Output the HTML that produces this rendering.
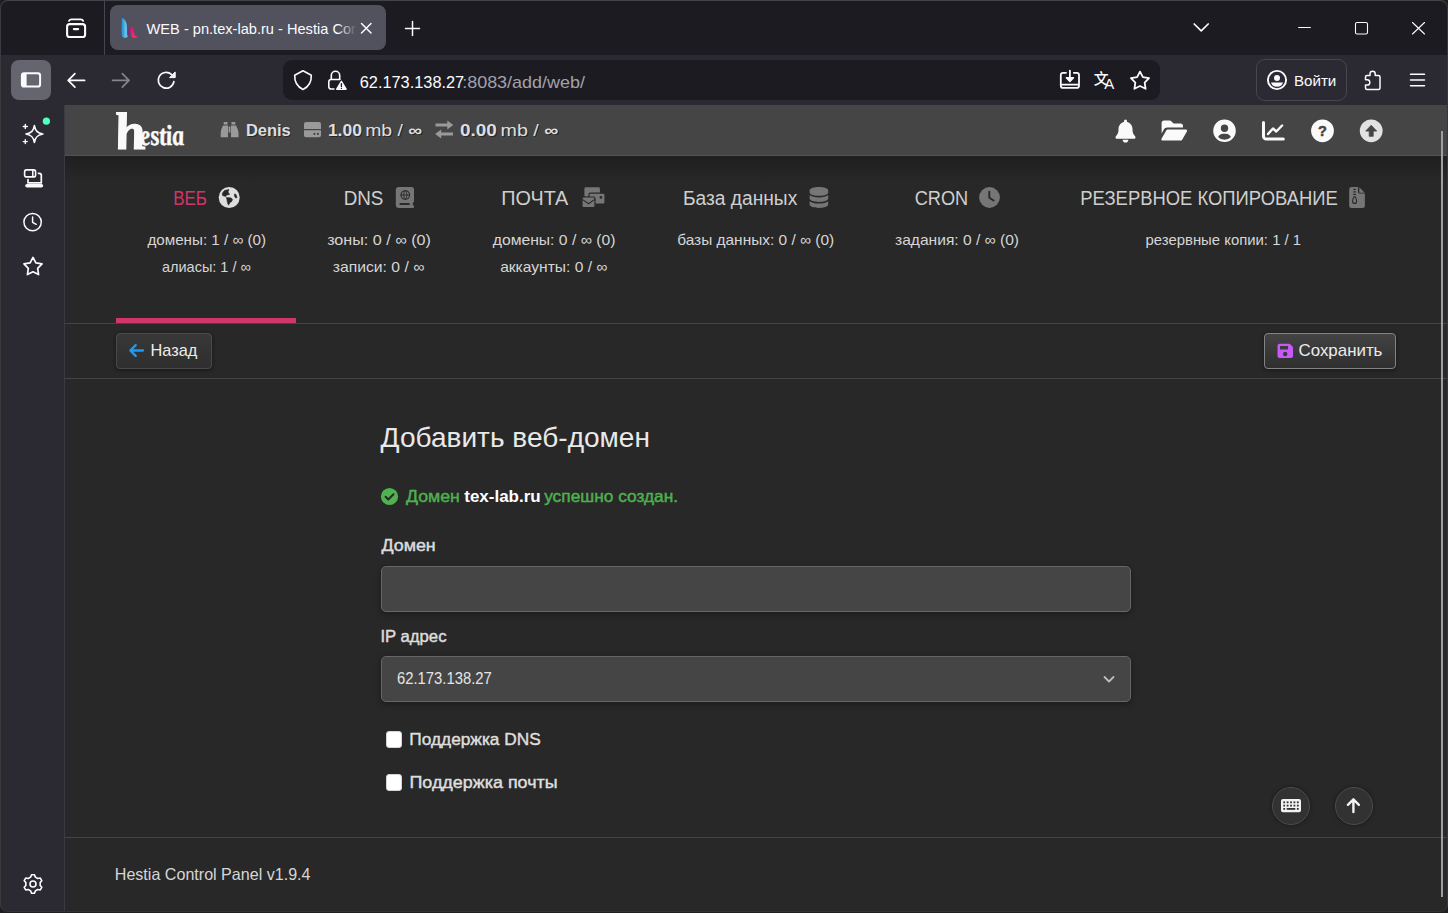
<!DOCTYPE html>
<html lang="ru">
<head>
<meta charset="utf-8">
<title>WEB - pn.tex-lab.ru - Hestia Control Panel</title>
<style>
*{box-sizing:border-box;margin:0;padding:0}
html,body{width:1448px;height:913px;overflow:hidden;background:#1f1f1f;font-family:"Liberation Sans","DejaVu Sans",sans-serif}
.abs{position:absolute}
svg{position:absolute;overflow:visible}
.t{position:absolute;left:0;top:0;white-space:nowrap;transform-origin:0 0;line-height:normal;display:block}
#win{position:absolute;left:0;top:0;width:1448px;height:912px;border-radius:8px;overflow:hidden;background:#2b2a33}
#winborder{position:absolute;left:0;top:0;width:1448px;height:912px;border-radius:8px;border:1px solid #444347;border-bottom-color:#333;border-right-color:#38373d;border-left-color:#3a3b3d;pointer-events:none}
#tabbar{left:0;top:0;width:1448px;height:55px;background:#1c1b22}
#tabsep{left:104px;top:1px;width:1px;height:54px;background:#47464e}
#tab{left:110px;top:5px;width:276px;height:45px;border-radius:8px;background:#52525e}
#navbar{left:0;top:55px;width:1448px;height:50px;background:#2b2a33}
#sbtn{left:11px;top:60px;width:40px;height:40px;border-radius:8px;background:#65656f}
#urlbar{left:283px;top:60px;width:877px;height:40px;border-radius:9px;background:#1c1b22}
#login{left:1256px;top:59px;width:91px;height:42px;border-radius:9px;border:1px solid #47464f}
#sidebar{left:0;top:105px;width:64px;height:808px;background:#2b2a33}
#sideline{left:64px;top:105px;width:1px;height:808px;background:#3b3a43}
#page{left:65px;top:105px;width:1382px;height:807px;background:#282828;overflow:hidden}
/* coordinates inside #page are page-local: subtract (65,105) */
#topbar{left:0;top:0;width:1382px;height:51px;background:#454545;border-bottom:1px solid #525252}
#topshadow{left:0;top:51px;width:1382px;height:26px;background:linear-gradient(#1f1f1f,#282828)}
#hl1{left:0;top:218px;width:1382px;height:1px;background:#444}
#hl2{left:0;top:273px;width:1382px;height:1px;background:#444}
#hl3{left:0;top:732px;width:1382px;height:1px;background:#444}
#active{left:51px;top:213px;width:180px;height:5px;background:#d1366b}
.btn{position:absolute;height:36px;top:228px;border:1px solid #4a4a4a;border-radius:4px;background:linear-gradient(#383838,#2e2e2e);box-shadow:0 1px 4px rgba(0,0,0,.45)}
.inp{position:absolute;left:316px;width:750px;height:46px;border:1px solid #676767;border-radius:5px;background:#454545;box-shadow:0 2px 6px rgba(0,0,0,.35)}
.chk{position:absolute;left:320.5px;width:16.5px;height:16.5px;border-radius:3px;background:#fff;border:1px solid #d4d4d4}
.fab{position:absolute;top:682px;width:38px;height:38px;border-radius:50%;background:#323232;border:1px solid #4c4c4c;box-shadow:0 0 4px rgba(0,0,0,.4)}
#tabfade{left:338px;top:12px;width:20px;height:30px;background:linear-gradient(90deg,rgba(82,82,94,0),#52525e 92%)}
#scroll{left:1376px;top:26px;width:2px;height:766px;background:#9d9d9d}
</style>
</head>
<body>
<div id="win">
  <div id="tabbar" class="abs"></div>
  <div id="tabsep" class="abs"></div>
  <div id="tab" class="abs"></div>
  <div id="navbar" class="abs"></div>
  <div id="sbtn" class="abs"></div>
  <div id="urlbar" class="abs"></div>
  <div id="login" class="abs"></div>
  <div id="sidebar" class="abs"></div>
  <div id="sideline" class="abs"></div>
  <div id="page" class="abs">
    <div id="topbar" class="abs"></div>
    <div id="topshadow" class="abs"></div>
    <div id="hl1" class="abs"></div>
    <div id="active" class="abs"></div>
    <div id="hl2" class="abs"></div>
    <div id="hl3" class="abs"></div>
    <div class="btn" style="left:51px;width:96px"></div>
    <div class="btn" style="left:1199px;width:132px;border-color:#838383;background:linear-gradient(#434343,#2f2f2f)"></div>
    <div class="inp" style="top:461px"></div>
    <div class="inp" style="top:551px"></div>
    <div class="chk" style="top:626.3px"></div>
    <div class="chk" style="top:669px"></div>
    <div class="fab" style="left:1207px"></div>
    <div class="fab" style="left:1270px"></div>
    <div id="scroll" class="abs"></div>
  </div>
  <svg id="icons" width="1448" height="913" viewBox="0 0 1448 913" style="left:0;top:0">
<defs>
  <linearGradient id="fav1" x1="0" y1="0" x2="1" y2="0"><stop offset="0" stop-color="#1a8ad6"/><stop offset=".7" stop-color="#6fc6ea"/><stop offset="1" stop-color="#3f9fdc"/></linearGradient>
  <linearGradient id="fav2" x1="0" y1="0" x2="0" y2="1"><stop offset="0" stop-color="#c81a62"/><stop offset="1" stop-color="#fb2a76"/></linearGradient>
</defs>
<!-- ===== Firefox chrome icons ===== -->
<g fill="none" stroke="#fbfbfe" stroke-width="1.6" stroke-linecap="round" stroke-linejoin="round">
  <!-- firefox view -->
  <path d="M69 20.900c.5-1.100 1.300-1.600 2.500-1.600h9.200c1.200 0 2 .5 2.500 1.600" stroke-width="1.800"/><rect x="67.100" y="24.100" width="18" height="12.900" rx="2.600" stroke-width="2.100"/><path d="M73.900 29.100h4.200" stroke-width="2.200"/>
  <!-- tab close -->
  <path d="M361.5 23.5l9.5 9.5M371 23.5l-9.5 9.5" stroke-width="1.5"/>
  <!-- new tab -->
  <path d="M405.5 28.5h14M412.5 21.5v14" stroke-width="1.5"/>
  <!-- list all tabs -->
  <path d="M1194.200 24l7 6.800 7-6.800" stroke-width="1.700"/>
  <!-- window controls -->
  <path d="M1298.600 27.500h11.800" stroke-width="1.100"/>
  <rect x="1355.5" y="22.5" width="12" height="11.5" rx="1.6" stroke-width="1.1"/>
  <path d="M1412.5 22.5l12 11.5M1424.5 22.5l-12 11.5" stroke-width="1.1"/>
  <!-- sidebar toggle -->
  <path d="M24 72.300h14a3.100 3.100 0 0 1 3.100 3.100v9.100a3.100 3.100 0 0 1-3.100 3.100h-14a3.100 3.100 0 0 1-3.100-3.100v-9.100a3.100 3.100 0 0 1 3.100-3.100zm2.600 2v11.300h11a1.500 1.500 0 0 0 1.500-1.500v-8.300a1.500 1.500 0 0 0-1.500-1.500z" fill="#fbfbfe" fill-rule="evenodd" stroke="none"/>
  <!-- back -->
  <path d="M84.600 80.400h-16.400M74.900 73.700l-6.700 6.700 6.700 6.700" stroke-width="1.700"/>
  <!-- reload -->
  <path d="M173.900 81.700a7.900 7.900 0 1 1-2.500-7.300" stroke-width="1.700"/><path d="M175.200 72.300v5.300h-5.300z" fill="#fbfbfe" stroke-width="1"/>
  <!-- shield -->
  <path d="M303 70.800l8.300 4.400c.300 6.500-2.300 11.300-8.300 14.300-6-3-8.600-7.800-8.300-14.300z" stroke-width="1.600"/>
  <!-- lock -->
  <path d="M331.300 79.300v-3.800a4.200 4.200 0 0 1 8.400 0v3.800" stroke-width="1.600"/><path d="M334 89h-3a2.200 2.200 0 0 1-2.200-2.200v-5.100a2.200 2.200 0 0 1 2.200-2.200h8.800" stroke-width="1.600"/>
  <!-- install / pwa -->
  <path d="M1066 72.800h-3a2.200 2.200 0 0 0-2.200 2.200v10.700a2.200 2.200 0 0 0 2.200 2.200h13.800a2.200 2.200 0 0 0 2.200-2.200v-10.700a2.200 2.200 0 0 0-2.200-2.200h-3M1061 84.700h17.800M1069.900 70.600v9" stroke-width="1.800"/><path d="M1066.300 77.800l3.600 3.800 3.600-3.800z" fill="#fbfbfe" stroke-width="1.400"/>
  <!-- star (urlbar) -->
  <path d="M1140.00 71.60L1142.88 77.14L1149.04 78.16L1144.66 82.61L1145.58 88.79L1140.00 86.00L1134.42 88.79L1135.34 82.61L1130.96 78.16L1137.12 77.14z" stroke-width="1.800"/>
  <!-- account -->
  <circle cx="1277" cy="80" r="9.100" stroke-width="1.900"/><circle cx="1277" cy="78" r="3" fill="#fbfbfe" stroke="none"/><path d="M1271 82.400h12c-.5 2.600-3 4.400-6 4.400s-5.500-1.800-6-4.400z" fill="#fbfbfe" stroke="none"/>
  <!-- extensions -->
  <path d="M1370 75.500v-1.700a2.600 2.600 0 0 1 5.200 0v1.700h3.300a1.500 1.500 0 0 1 1.500 1.500v11a1.500 1.500 0 0 1-1.500 1.500h-11.500a1.500 1.500 0 0 1-1.500-1.500v-3h1.700a2.600 2.600 0 0 0 0-5.200h-1.700v-2.800a1.500 1.500 0 0 1 1.500-1.500z" stroke-width="1.500"/>
  <!-- hamburger -->
  <path d="M1410.500 74.300h14M1410.500 80h14M1410.500 85.700h14" stroke-width="1.500"/>
  <!-- sidebar: sparkle -->
  <path d="M34.400 125.600c.9 5.400 3 7.400 8.400 8.400-5.400.9-7.500 3-8.400 8.400-.9-5.400-3-7.500-8.400-8.400 5.400-1 7.500-3 8.400-8.400z" stroke-width="1.700"/>
  <path d="M25.300 124.500v4M23.300 126.500h4M25.300 139.600v4M23.300 141.600h4" stroke-width="1.400"/>
  <!-- sidebar: synced tabs -->
  <rect x="24.600" y="169.900" width="11" height="7" rx="2" stroke-width="1.600"/><path d="M32.800 170.500v6" stroke-width="1.500"/>
  <path d="M38.500 173.300h.8a2 2 0 0 1 2 2v7.600h-13.300v-3.200" stroke-width="1.700"/>
  <path d="M27 185.800h14.400" stroke-width="3.600"/>
  <!-- sidebar: history clock -->
  <circle cx="32.600" cy="222.100" r="8.700" stroke-width="1.500"/><path d="M32.600 217v5.300l3.600 2" stroke-width="1.500"/>
  <!-- sidebar: bookmarks star -->
  <path d="M33.00 257.40L35.88 262.94L42.04 263.96L37.66 268.41L38.58 274.59L33.00 271.80L27.42 274.59L28.34 268.41L23.96 263.96L30.12 262.94z" stroke-width="1.700"/>
  <!-- sidebar: gear -->
  <circle cx="33" cy="884" r="3" stroke-width="1.600"/>
  <path d="M31.53 874.72L34.47 874.72L35.38 877.10L37.79 878.49L40.31 878.08L41.78 880.63L40.17 882.61L40.17 885.39L41.78 887.37L40.31 889.92L37.79 889.51L35.38 890.90L34.47 893.28L31.53 893.28L30.62 890.90L28.21 889.51L25.69 889.92L24.22 887.37L25.83 885.39L25.83 882.61L24.22 880.63L25.69 878.08L28.21 878.49L30.62 877.10z" stroke-width="1.600"/>
</g>
<!-- forward (disabled) -->
<path d="M112.600 80.400h16.400M122.300 73.700l6.700 6.700-6.700 6.700" fill="none" stroke="#85848d" stroke-width="1.700" stroke-linecap="round" stroke-linejoin="round"/>
<!-- lock warning triangle -->
<path d="M341.400 81.300l4.700 7.900h-9.400z" fill="#fbfbfe" stroke="#fbfbfe" stroke-width="1.400" stroke-linejoin="round"/>
<path d="M341.400 83.600v2.900M341.400 88.300v.1" stroke="#1c1b22" stroke-width="1.300" stroke-linecap="round"/>
<!-- translate icon built from real glyphs -->
<text x="1093.800" y="83.600" font-family="'Noto Sans CJK SC','Noto Sans CJK JP',sans-serif" font-size="14.800" font-weight="500" fill="#fbfbfe">文</text>
<text x="1104.200" y="88.900" font-family="'Liberation Sans',sans-serif" font-size="15" fill="#fbfbfe">A</text>
<!-- sidebar green dot -->
<circle cx="46.400" cy="121.200" r="3.600" fill="#54ffbd"/>
<!-- favicon -->
<path d="M121.900 17.900c2.600.6 4.900 3.600 5.100 9.100.1 4 .2 7 1.100 9.500-1.600 1.800-4.600 2.100-5.800 0-1.100-2.500-1-10.500-.4-18.600z" fill="url(#fav1)"/>
<path d="M127.200 33c.6-3 2.100-5.700 3.800-6.500l.5 3.500c-1.500 1.500-2.200 4-2.900 6.600-.6 0-1.300-1.600-1.400-3.600z" fill="#7a2b8c"/>
<path d="M130 27.200c1-1 3-1 3.500.8.500 3 .5 6 1.500 7.500.8 1 2 .9 3 .5-1 2-4 2.500-5.700 1.200-1.800-1.700-1.500-6.200-2.300-10z" fill="url(#fav2)"/>

<!-- ===== Hestia icons ===== -->
<g fill="#9a9a9a">
  <!-- binoculars -->
  <path d="M223.700 122h3.800v2.600h-3.800zM231.500 122h3.800v2.600h-3.800zM223 125.500h5v11.800h-7.300v-3.800c0-3 1-5.500 2.300-8zM236 125.500h-5v11.800h7.500v-3.800c0-3-1.200-5.500-2.500-8zM228.600 126.500h1.800v6h-1.800z"/>
  <!-- hdd -->
  <path d="M306 122h13a2 2 0 0 1 2 2v5h-17v-5a2 2 0 0 1 2-2zM304 130.300h17v5a2 2 0 0 1-2 2h-13a2 2 0 0 1-2-2zm10.400 2.500a1.100 1.100 0 1 0 0 2.200 1.100 1.100 0 0 0 0-2.200zm3.500 0a1.100 1.100 0 1 0 0 2.200 1.100 1.100 0 0 0 0-2.200z" fill-rule="evenodd"/>
  <!-- right-left arrows -->
  <path d="M435.500 123.500h11.800v-3l6 4.500-6 4.500v-3h-11.800zM453 132.600h-11.800v-3l-6 4.500 6 4.500v-3h11.800z"/>
</g>
<g fill="#fafafa">
  <!-- bell -->
  <path d="M1125.500 119.600a1.500 1.500 0 0 1 1.500 1.500v.9c3.200.7 5.500 3.500 5.500 6.900v1c0 2.200.8 4.300 2.200 5.900l.4.400c.4.500.5 1.100.3 1.700-.3.500-.8.900-1.500.9h-16.800c-.6 0-1.200-.4-1.500-.9-.2-.6-.1-1.200.3-1.700l.4-.4c1.400-1.600 2.200-3.700 2.200-5.900v-1c0-3.400 2.300-6.200 5.500-6.900v-.9a1.500 1.500 0 0 1 1.500-1.500zM1128.300 139.700a2.800 2.800 0 0 1-5.600 0z"/>
  <!-- folder open -->
  <path d="M1161.600 123.100a2.500 2.500 0 0 1 2.500-2.500h5.500c.7 0 1.400.3 1.900.8l1.800 1.800c.3.300.6.400 1 .4h6.200a2.500 2.500 0 0 1 2.500 2.500v1.500h-15.700c-1.500 0-2.900.8-3.600 2.100l-2.100 3.800zM1162.600 140.600c-.5 0-.9-.2-1.100-.6s-.2-.9 0-1.300l4.600-8c.4-.8 1.200-1.200 2.100-1.200h17.600c.5 0 .9.200 1.100.6s.2.900 0 1.300l-4.600 8c-.4.800-1.200 1.200-2.100 1.200z"/>
  <!-- circle user -->
  <path d="M1224.500 119.500a11.300 11.300 0 1 0 0 22.600 11.300 11.300 0 0 0 0-22.600zm0 5a3.700 3.700 0 1 1 0 7.400 3.700 3.700 0 0 1 0-7.400zm-6.400 12.500c.8-2 2.700-3.300 4.900-3.300h3c2.200 0 4.100 1.300 4.900 3.300a8.600 8.600 0 0 1-12.800 0z" fill-rule="evenodd"/>
  <!-- chart line -->
  <path d="M1263.500 121a1.500 1.500 0 0 1 1.500 1.500v13.800c0 .7.600 1.300 1.300 1.300h17a1.500 1.500 0 0 1 0 3h-17a4.300 4.300 0 0 1-4.300-4.300v-13.800a1.500 1.500 0 0 1 1.500-1.500z"/>
  <path d="M1268 134l5-5.500 3.300 3 5.800-6" fill="none" stroke="#fafafa" stroke-width="2.400" stroke-linecap="round" stroke-linejoin="round"/>
  <!-- circle question -->
  <circle cx="1322.500" cy="130.800" r="11.400"/>
  <!-- circle up -->
  <circle cx="1371.200" cy="130.800" r="11.400" fill="#e2e2e2"/>
</g>
<text x="1322.500" y="135.900" text-anchor="middle" font-family="'Liberation Sans',sans-serif" font-size="14.500" font-weight="700" fill="#454545" stroke="#454545" stroke-width=".5">?</text>
<path d="M1371.200 125.300l5.500 5.800h-3.500v5.200h-4v-5.200h-3.500z" fill="#454545" stroke="#454545" stroke-width=".8" stroke-linejoin="round"/>

<!-- nav tab icons -->
<!-- globe (active) -->
<circle cx="229.200" cy="197.500" r="10.500" fill="#dedede"/>
<path d="M222.400 193.200l1.900-2.600 4.600-1.200-.9 2.600 1.600 2.400-3 .6-1 1.600-3.100-1.100zM226.400 197.400l4.700.5 1.500 1.600-1 2-2 1.500-1 2.200-1.100-2.200-.5-3zM234.400 193.900l1.600.5 1.100 3.100-1.100.6-1.200-1z" fill="#282828" stroke="#282828" stroke-width=".6" stroke-linejoin="round"/>
<g fill="#767676">
  <!-- book atlas -->
  <path d="M399 187h12.500a2.500 2.500 0 0 1 2.500 2.500v11.700a1.600 1.600 0 0 1-1.200 1.600v2.400a1.400 1.400 0 0 1 0 2.800h-13.800a3.200 3.200 0 0 1-3.200-3.200v-14.600a3.200 3.200 0 0 1 3.200-3.200z"/>
  <!-- mail bulk -->
  <rect x="584.400" y="187.300" width="15.500" height="9.500" rx="1.400"/>
  <rect x="589" y="193.200" width="16" height="10.800" rx="1.400" stroke="#282828" stroke-width="1.200"/>
  <rect x="582" y="197" width="13" height="10.700" rx="1.400" stroke="#282828" stroke-width="1.200"/>
  <!-- database -->
  <path d="M818.900 187c5.100 0 9.300 1.500 9.300 3.400v2c0 1.900-4.200 3.400-9.300 3.400s-9.300-1.500-9.300-3.400v-2c0-1.900 4.200-3.400 9.300-3.400zM828.200 195.100v3.500c0 1.900-4.200 3.400-9.300 3.400s-9.300-1.500-9.300-3.400v-3.500c1.800 1.500 5.500 2.300 9.300 2.300s7.500-.8 9.300-2.300zM828.200 201.300v3.300c0 1.900-4.200 3.400-9.300 3.400s-9.300-1.500-9.300-3.400v-3.300c1.800 1.500 5.500 2.300 9.300 2.300s7.500-.8 9.300-2.300z"/>
  <!-- clock solid -->
  <circle cx="989.500" cy="197.500" r="10.400"/>
  <!-- file zipper -->
  <path d="M1351.700 187h6.300v5a1.500 1.500 0 0 0 1.500 1.500h5.400v12a2.500 2.500 0 0 1-2.500 2.500h-10.700a2.500 2.500 0 0 1-2.500-2.500v-16a2.500 2.500 0 0 1 2.500-2.500zM1359.300 187.300l5.400 5.400h-5.400z"/>
</g>
<g fill="none" stroke="#282828" stroke-linecap="round" stroke-linejoin="round">
  <path d="M989.300 191.600v6.100l4.300 2.800" stroke-width="1.900"/>
  <circle cx="405.300" cy="195" r="4.300" stroke-width="1.100"/><path d="M401 195h8.600M405.300 190.700c-2.200 2.300-2.200 6.300 0 8.600M405.300 190.700c2.200 2.300 2.200 6.300 0 8.600" stroke-width=".9"/>
  <path d="M399.600 204h10" stroke-width="1.900" stroke-linecap="butt"/>
  <path d="M582.600 199.600l5.900 4.200 5.900-4.200" stroke-width="1.100"/>
  <path d="M1353.400 189.400h2.400M1353.400 191.900h2.400M1353.400 194.400h2.400" stroke-width="1.100" stroke-linecap="butt"/>
  <path d="M1354.600 196.600c1 0 2 3.200 2 4.800a2 2 0 0 1-4 0c0-1.600 1-4.800 2-4.800z" stroke-width="1.100"/>
</g>
<circle cx="600.900" cy="197.400" r="1.300" fill="#282828"/>

<!-- toolbar icons -->
<path d="M143 350.500h-12.500M135.700 345.100l-5.400 5.400 5.400 5.400" fill="none" stroke="#1e9bf7" stroke-width="2.300" stroke-linecap="round" stroke-linejoin="round"/>
<path d="M1279.500 343.800h9.500c.6 0 1.100.2 1.500.6l1.900 1.900c.4.400.6.900.6 1.500v8.200a2 2 0 0 1-2 2h-11.500a2 2 0 0 1-2-2v-10.200a2 2 0 0 1 2-2zm.5 2.300v3.300h8v-3.300zm5.200 5.700a2.200 2.200 0 1 0 0 4.400 2.200 2.200 0 0 0 0-4.400z" fill="#c659f7" fill-rule="evenodd"/>

<!-- success check -->
<circle cx="389.500" cy="496.500" r="8.600" fill="#4fb34f"/>
<path d="M385.600 496.800l2.700 2.700 5.200-5.300" fill="none" stroke="#282828" stroke-width="2" stroke-linecap="round" stroke-linejoin="round"/>

<!-- select chevron -->
<path d="M1104.500 677l4.500 4.500 4.500-4.500" fill="none" stroke="#bdbdbd" stroke-width="1.800" stroke-linecap="round" stroke-linejoin="round"/>

<!-- floating buttons -->
<path d="M1283 799h16a2 2 0 0 1 2 2v9.200a2 2 0 0 1-2 2h-16a2 2 0 0 1-2-2v-9.200a2 2 0 0 1 2-2z" fill="#f2f2f2"/>
<g fill="#323232">
  <rect x="1283.300" y="801.400" width="1.800" height="1.800"/><rect x="1286.700" y="801.400" width="1.800" height="1.800"/><rect x="1290.100" y="801.400" width="1.800" height="1.800"/><rect x="1293.500" y="801.400" width="1.800" height="1.800"/><rect x="1296.900" y="801.400" width="1.800" height="1.800"/>
  <rect x="1283.300" y="804.700" width="1.800" height="1.800"/><rect x="1286.700" y="804.700" width="1.800" height="1.800"/><rect x="1290.100" y="804.700" width="1.800" height="1.800"/><rect x="1293.500" y="804.700" width="1.800" height="1.800"/><rect x="1296.900" y="804.700" width="1.800" height="1.800"/>
  <rect x="1283.300" y="808" width="1.800" height="1.800"/><rect x="1286.700" y="808" width="8.600" height="1.800"/><rect x="1296.900" y="808" width="1.800" height="1.800"/>
</g>
<path d="M1353.400 812v-12.500M1347.900 804.800l5.500-5.500 5.500 5.500" fill="none" stroke="#f2f2f2" stroke-width="2.400" stroke-linecap="round" stroke-linejoin="round"/>
</svg>

  <span id="t0" class="t tabtitle" style="font-size:15px;color:#fbfbfe;transform:translate(146.56px,20.17px) scaleX(0.9735)">WEB - pn.tex-lab.ru - Hestia Cor</span>
<span id="t1" class="t " style="font-size:15.7px;color:#fbfbfe;transform:translate(359.73px,73.79px) scaleX(1.0410)">62.173.138.27</span>
<span id="t2" class="t " style="font-size:15.7px;color:#a3a2ab;transform:translate(462.16px,73.79px) scaleX(1.1451)">:8083/add/web/</span>
<span id="t3" class="t " style="font-size:15px;color:#fbfbfe;transform:translate(1293.93px,72.42px) scaleX(1.0092)">Войти</span>
<span id="t4" class="t " style="font-size:16.5px;color:#dedede;font-weight:700;text-shadow:1px 1px 0 rgba(0,0,0,.45);;transform:translate(245.91px,120.82px) scaleX(0.9979)">Denis</span>
<span id="t5" class="t " style="font-size:16.5px;color:#dedede;font-weight:700;text-shadow:1px 1px 0 rgba(0,0,0,.45);;transform:translate(327.90px,120.82px) scaleX(1.0566)">1.00</span>
<span id="t6" class="t " style="font-size:16.5px;color:#dedede;text-shadow:1px 1px 0 rgba(0,0,0,.45);;transform:translate(365.19px,120.82px) scaleX(1.1752)">mb / <b>∞</b></span>
<span id="t7" class="t " style="font-size:16.5px;color:#dedede;font-weight:700;text-shadow:1px 1px 0 rgba(0,0,0,.45);;transform:translate(460.06px,120.82px) scaleX(1.1460)">0.00</span>
<span id="t8" class="t " style="font-size:16.5px;color:#dedede;text-shadow:1px 1px 0 rgba(0,0,0,.45);;transform:translate(500.55px,120.82px) scaleX(1.1927)">mb / <b>∞</b></span>
<span id="t9" class="t logo" style="font-size:52.5px;font-family:'Liberation Serif','DejaVu Serif',serif;font-style:italic;font-weight:700;color:#fafafa;-webkit-text-stroke:1.2px #fafafa;;transform-origin:0 46.8px;transform:translate(117.27px,101.22px) scaleX(1.0363) skewX(9deg)">h</span>
<span id="t10" class="t logo" style="font-size:29px;font-family:'Liberation Serif','DejaVu Serif',serif;font-style:italic;font-weight:700;color:#fafafa;-webkit-text-stroke:.5px #fafafa;;transform-origin:0 25.8px;transform:translate(140.82px,119.16px) scaleX(0.8075) skewX(8deg)">estia</span>
<span id="t11" class="t " style="font-size:20px;color:#d1366b;transform:translate(173.21px,186.90px) scaleX(0.8479)">ВЕБ</span>
<span id="t12" class="t " style="font-size:20px;color:#cfcfcf;transform:translate(343.63px,186.90px) scaleX(0.9401)">DNS</span>
<span id="t13" class="t " style="font-size:20px;color:#cfcfcf;transform:translate(501.24px,186.90px) scaleX(0.9907)">ПОЧТА</span>
<span id="t14" class="t " style="font-size:20px;color:#cfcfcf;transform:translate(683.00px,186.90px) scaleX(0.9590)">База данных</span>
<span id="t15" class="t " style="font-size:20px;color:#cfcfcf;transform:translate(914.63px,186.90px) scaleX(0.9092)">CRON</span>
<span id="t16" class="t " style="font-size:20px;color:#cfcfcf;transform:translate(1080.33px,186.90px) scaleX(0.9209)">РЕЗЕРВНОЕ КОПИРОВАНИЕ</span>
<span id="t17" class="t " style="font-size:15px;color:#d6d6d6;transform:translate(147.41px,231.43px) scaleX(1.0125)">домены: 1 / ∞ (0)</span>
<span id="t18" class="t " style="font-size:15px;color:#d6d6d6;transform:translate(161.95px,258.43px) scaleX(0.9665)">алиасы: 1 / ∞</span>
<span id="t19" class="t " style="font-size:15px;color:#d6d6d6;transform:translate(327.14px,231.43px) scaleX(1.0759)">зоны: 0 / ∞ (0)</span>
<span id="t20" class="t " style="font-size:15px;color:#d6d6d6;transform:translate(332.83px,258.43px) scaleX(1.0461)">записи: 0 / ∞</span>
<span id="t21" class="t " style="font-size:15px;color:#d6d6d6;transform:translate(492.73px,231.43px) scaleX(1.0470)">домены: 0 / ∞ (0)</span>
<span id="t22" class="t " style="font-size:15px;color:#d6d6d6;transform:translate(500.13px,258.43px) scaleX(1.0386)">аккаунты: 0 / ∞</span>
<span id="t23" class="t " style="font-size:15px;color:#d6d6d6;transform:translate(677.21px,231.43px) scaleX(1.0283)">базы данных: 0 / ∞ (0)</span>
<span id="t24" class="t " style="font-size:15px;color:#d6d6d6;transform:translate(895.05px,231.43px) scaleX(1.0379)">задания: 0 / ∞ (0)</span>
<span id="t25" class="t " style="font-size:15px;color:#d6d6d6;transform:translate(1145.54px,231.43px) scaleX(0.9922)">резервные копии: 1 / 1</span>
<span id="t26" class="t " style="font-size:17px;color:#ececec;transform:translate(150.55px,340.62px) scaleX(0.9608)">Назад</span>
<span id="t27" class="t " style="font-size:17px;color:#ececec;transform:translate(1298.55px,340.62px) scaleX(0.9927)">Сохранить</span>
<h1 id="t28" class="t " style="font-size:27.5px;color:#e9e9e9;font-weight:400;transform:translate(380.61px,422.11px) scaleX(1.0199)">Добавить веб-домен</h1>
<span id="t29" class="t " style="font-size:16.5px;color:#4fb04f;-webkit-text-stroke:.45px currentColor;;transform:translate(405.98px,487.07px) scaleX(1.0740)">Домен</span>
<span id="t30" class="t " style="font-size:16.5px;color:#ffffff;font-weight:700;transform:translate(464.25px,487.07px) scaleX(1.0280)">tex-lab.ru</span>
<span id="t31" class="t " style="font-size:16.5px;color:#4fb04f;-webkit-text-stroke:.45px currentColor;;transform:translate(544.15px,487.07px) scaleX(1.0492)">успешно создан.</span>
<label id="t32" class="t " style="font-size:16px;color:#dcdcdc;-webkit-text-stroke:.45px currentColor;;transform:translate(381.41px,537.27px) scaleX(1.1157)">Домен</label>
<label id="t33" class="t " style="font-size:16px;color:#dcdcdc;-webkit-text-stroke:.45px currentColor;;transform:translate(380.41px,627.52px) scaleX(1.0441)">IP адрес</label>
<span id="t34" class="t " style="font-size:16.5px;color:#e4e4e4;transform:translate(396.94px,669.07px) scaleX(0.8997)">62.173.138.27</span>
<label id="t35" class="t " style="font-size:17px;color:#dedede;-webkit-text-stroke:.45px currentColor;;transform:translate(409.34px,729.62px) scaleX(1.0158)">Поддержка DNS</label>
<label id="t36" class="t " style="font-size:17px;color:#dedede;-webkit-text-stroke:.45px currentColor;;transform:translate(409.44px,772.62px) scaleX(1.0540)">Поддержка почты</label>
<span id="t37" class="t " style="font-size:16.5px;color:#d6d6d6;transform:translate(114.78px,865.07px) scaleX(0.9745)">Hestia Control Panel v1.9.4</span>
  <div id="tabfade" class="abs"></div>
</div>
<div id="winborder"></div>
</body>
</html>
